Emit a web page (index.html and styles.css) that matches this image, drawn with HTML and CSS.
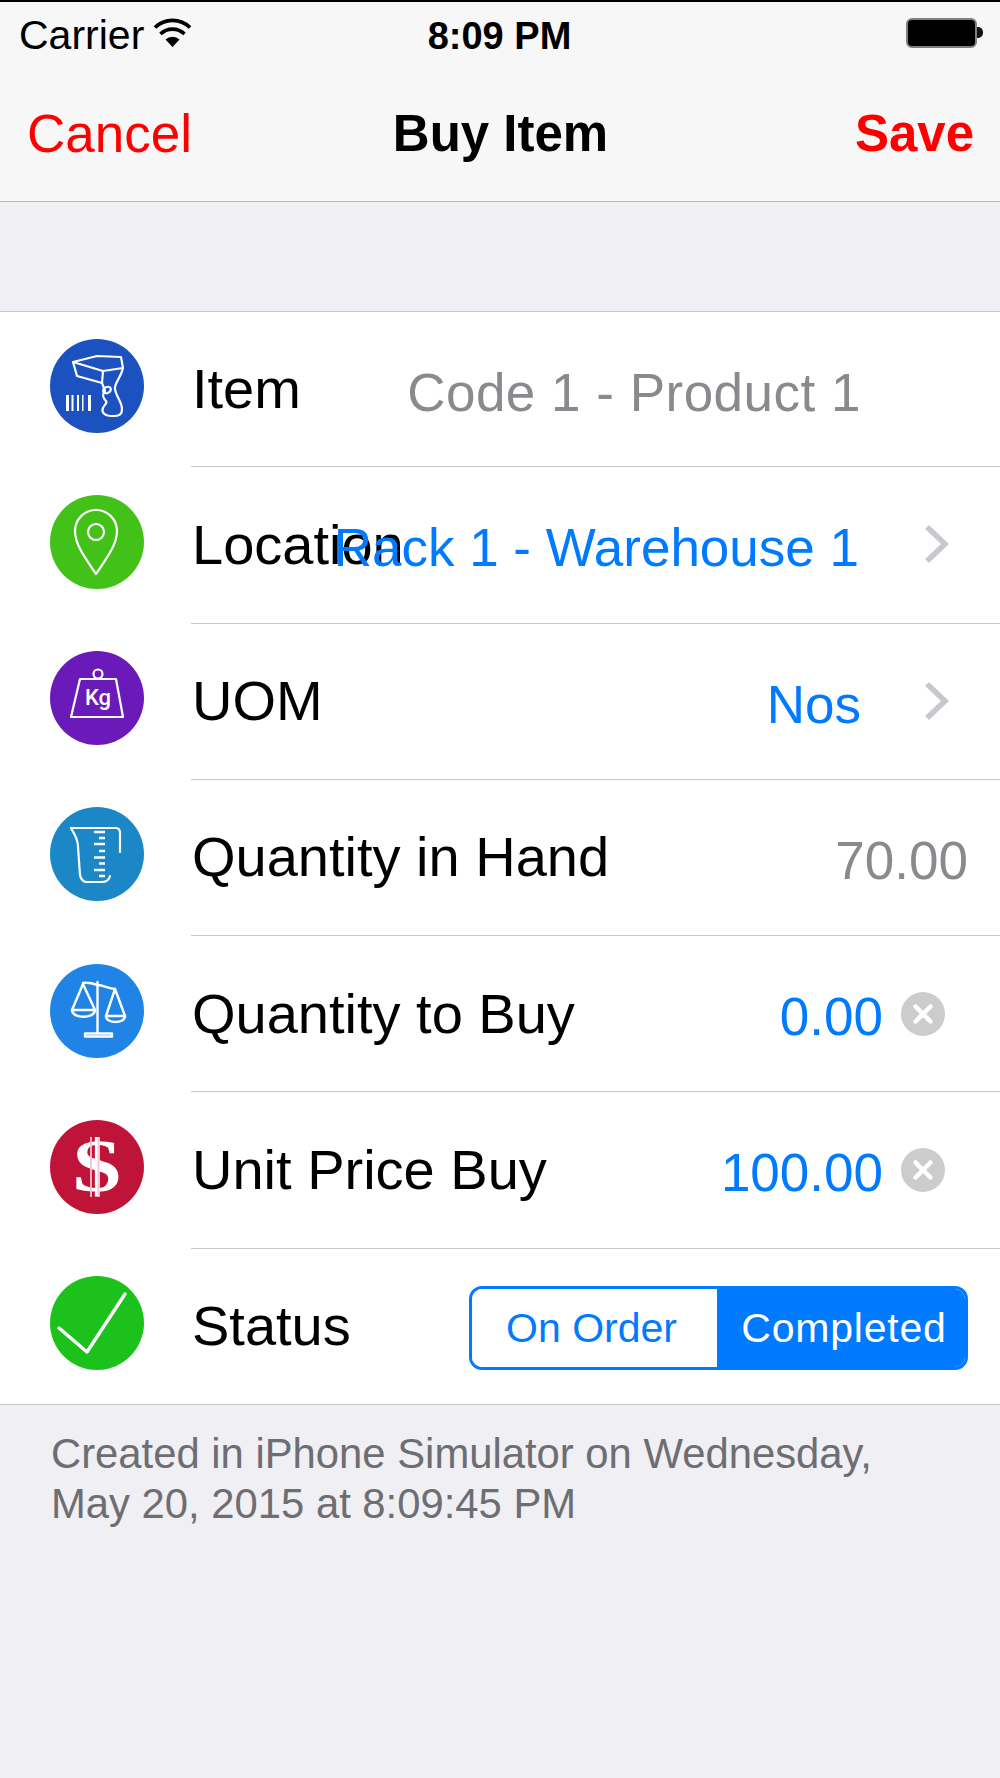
FILE: index.html
```html
<!DOCTYPE html>
<html lang="en">
<head>
<meta charset="utf-8">
<title>Buy Item</title>
<link rel="stylesheet" href="styles.css">
</head>
<body>
<div class="screen">
  <header class="bar">
    <div class="status">
      <div class="status-left">
        <span>Carrier</span>
        <svg class="wifi" viewBox="0 0 39 29"><path d="M19.500 29 L12.500 21.500 A10.500 10.500 0 0 1 26.500 21.500 Z" fill="#000"/><path d="M7.500 16 A17 17 0 0 1 31.500 16" fill="none" stroke="#000" stroke-width="3.800"/><path d="M2 9.500 A25 25 0 0 1 37 9.500" fill="none" stroke="#000" stroke-width="3.800"/></svg>
      </div>
      <span class="clock">8:09 PM</span>
      <div class="battery"><span class="battery-body"></span><span class="battery-tip"></span></div>
    </div>
    <nav class="nav">
      <span class="nav-btn">Cancel</span>
      <span class="nav-title">Buy Item</span>
      <span class="nav-btn nav-save">Save</span>
    </nav>
  </header>

  <main class="form">
    <div class="row">
      <svg class="icon" viewBox="0 0 94 94"><circle cx="47" cy="47" r="47" fill="#1b52c0"/><g fill="none" stroke="#fff" stroke-width="2.200" stroke-linejoin="round"><path d="M23 23 L47 17 L71 18 L73 29 L53 32 Z"/><path d="M23 23 L27 37 L52 44 L53 32"/><path d="M73 29 C71 38 66 42 65 48 C64 55 72 62 72 70 C72 75 69 77 65 77 L60 77 C55 77 51 73 53 69 C54 66 58 64 56 62 C53 59 52 55 55 52 L52 44"/><ellipse cx="57" cy="51" rx="4" ry="3" transform="rotate(-25 57 51)"/></g><g fill="#fff"><rect x="16" y="56" width="3" height="16"/><rect x="21.500" y="56" width="2" height="16"/><rect x="27" y="56" width="2" height="16"/><rect x="32" y="56" width="1.500" height="16"/><rect x="38" y="56" width="3" height="16"/></g></svg>
      <div class="cell">
        <span class="label">Item</span>
        <span class="value value-gray value-item">Code 1 - Product 1</span>
      </div>
    </div>
    <div class="row">
      <svg class="icon" viewBox="0 0 94 94"><circle cx="47" cy="47" r="47" fill="#42c118"/><g fill="none" stroke="#fff" stroke-width="2.200"><path d="M46 79 C36 64 25 50 25 36 A21 21 0 0 1 67 36 C67 50 56 64 46 79 Z" stroke-linejoin="round"/><circle cx="46" cy="37" r="8"/></g></svg>
      <div class="cell">
        <span class="label">Location</span>
        <span class="value value-blue value-link">Rack 1 - Warehouse 1</span>
        <svg class="chevron" viewBox="0 0 27 42"><path d="M4 4 L22 21 L4 38" fill="none" stroke="#c7c7cc" stroke-width="5.500"/></svg>
      </div>
    </div>
    <div class="row">
      <svg class="icon" viewBox="0 0 94 94"><circle cx="47" cy="47" r="47" fill="#6a1ab8"/><g fill="none" stroke="#fff" stroke-width="2.200" stroke-linejoin="round"><circle cx="48" cy="23" r="4.500"/><path d="M30 28 L66 28 L73 66 L21 66 Z"/></g><text x="48" y="54" class="kg">Kg</text></svg>
      <div class="cell">
        <span class="label">UOM</span>
        <span class="value value-blue value-nos">Nos</span>
        <svg class="chevron" viewBox="0 0 27 42"><path d="M4 4 L22 21 L4 38" fill="none" stroke="#c7c7cc" stroke-width="5.500"/></svg>
      </div>
    </div>
    <div class="row">
      <svg class="icon" viewBox="0 0 94 94"><circle cx="47" cy="47" r="47" fill="#1b87c6"/><g fill="none" stroke="#fff" stroke-width="2.200" stroke-linecap="round" stroke-linejoin="round"><path d="M21 21 L66 21 C69 21 70 23 70 26 L70 45"/><path d="M21 21 C25 28 28 33 28 40 L30 68 C31 73 33 75 37 75 L52 75 C56 75 59 73 60 69"/></g><g stroke="#fff" stroke-width="2.400"><path d="M44 25 H55 M49 31 H55 M44 37 H55 M49 44 H55 M44 50.500 H55 M49 56.500 H55 M44 63 H55 M49 69 H55"/></g></svg>
      <div class="cell">
        <span class="label">Quantity in Hand</span>
        <span class="value value-gray">70.00</span>
      </div>
    </div>
    <div class="row">
      <svg class="icon" viewBox="0 0 94 94"><circle cx="47" cy="47" r="47" fill="#1f84e6"/><g fill="none" stroke="#fff" stroke-width="2.400" stroke-linejoin="round" stroke-linecap="round"><path d="M47.500 18 V68"/><path d="M35 69.500 H62 V72.500 H35 Z"/><path d="M47.500 21 C42 19 38 18 33 19 M47.500 21 C54 21 58 25 65 25"/><path d="M33 20 L22 46 H45 Z"/><path d="M65 25 L56 52 H75 Z"/><path d="M22 46 C22 55 45 55 45 46"/><path d="M56 52 C56 60 75 60 75 52"/></g></svg>
      <div class="cell">
        <span class="label">Quantity to Buy</span>
        <span class="value value-blue value-clear">0.00</span>
        <svg class="clear" viewBox="0 0 44 44"><circle cx="22" cy="22" r="22" fill="#ccc"/><path d="M14.500 14.500 L29.500 29.500 M29.500 14.500 L14.500 29.500" stroke="#fff" stroke-width="4.500" stroke-linecap="round"/></svg>
      </div>
    </div>
    <div class="row">
      <svg class="icon" viewBox="0 0 94 94"><circle cx="47" cy="47" r="47" fill="#c01338"/><text class="dollar" transform="translate(47 71) scale(1.3 1)">$</text><path d="M41 17 V77 M48.500 17 V77" stroke="#f3c4cf" stroke-width="1.800"/></svg>
      <div class="cell">
        <span class="label">Unit Price Buy</span>
        <span class="value value-blue value-clear">100.00</span>
        <svg class="clear" viewBox="0 0 44 44"><circle cx="22" cy="22" r="22" fill="#ccc"/><path d="M14.500 14.500 L29.500 29.500 M29.500 14.500 L14.500 29.500" stroke="#fff" stroke-width="4.500" stroke-linecap="round"/></svg>
      </div>
    </div>
    <div class="row row-last">
      <svg class="icon" viewBox="0 0 94 94"><circle cx="47" cy="47" r="47" fill="#1cc11c"/><path d="M9 52 L37 76 L75 18" fill="none" stroke="#fff" stroke-width="3.400" stroke-linecap="round" stroke-linejoin="round"/></svg>
      <div class="cell">
        <span class="label">Status</span>
        <div class="segment">
          <span class="seg seg-off">On Order</span>
          <span class="seg seg-on">Completed</span>
        </div>
      </div>
    </div>
  </main>

  <p class="footnote">Created in iPhone Simulator on Wednesday,<br>May 20, 2015 at 8:09:45 PM</p>
</div>
</body>
</html>
```

FILE: styles.css
```css
* { box-sizing: border-box; }
html, body { margin: 0; padding: 0; }
body {
  width: 1000px;
  height: 1778px;
  overflow: hidden;
  font-family: "Liberation Sans", Arial, sans-serif;
  color: #000;
  background: #000;
}
.screen {
  height: 1776px;
  margin-top: 2px;
  background: #efeff4;
  display: flex;
  flex-direction: column;
}
.bar {
  height: 200px;
  background: #f7f7f7;
  border-bottom: 1px solid #b8b8ba;
  flex: none;
}
.status {
  height: 62px;
  padding: 4px 20px 0 19px;
  display: grid;
  grid-template-columns: 1fr auto 1fr;
  align-items: center;
  font-size: 41px;
}
.status-left { display: flex; align-items: center; gap: 9px; }
.wifi { width: 39px; height: 29px; margin-top: -6px; }
.clock { font-weight: 700; font-size: 38px; margin-top: 2px; }
.battery { justify-self: end; display: flex; align-items: center; margin-right: -3px; margin-top: -5px; }
.battery-body {
  width: 71px;
  height: 30px;
  background: #000;
  border: 2px solid #808080;
  border-radius: 6px;
}
.battery-tip { width: 6px; height: 11px; background: #111; border-radius: 0 5px 5px 0; }
.nav {
  height: 136px;
  padding: 2px 26px 0 27px;
  display: grid;
  grid-template-columns: 1fr auto 1fr;
  align-items: center;
  font-size: 51px;
}
.nav-btn { color: #ff0000; font-size: 53px; }
.nav-title { font-weight: 700; }
.nav-save { font-weight: 700; font-size: 51px; justify-self: end; }
.form {
  margin-top: 109px;
  background: #fff;
  border-top: 1px solid #c8c7cc;
  border-bottom: 1px solid #c8c7cc;
  flex: none;
}
.row {
  height: 156.25px;
  padding-left: 50px;
  display: flex;
  align-items: center;
  gap: 47px;
}
.row:first-child, .row-last { height: 155.25px; }
.icon { width: 94px; height: 94px; flex: none; margin-top: -7px; }
.cell {
  flex: 1;
  height: 100%;
  position: relative;
  display: flex;
  align-items: center;
  justify-content: flex-end;
  border-bottom: 1px solid #c8c7cc;
  font-size: 53px;
  padding-right: 32px;
}
.row-last .cell { border-bottom: 0; }
.label { position: absolute; left: 1px; top: 50%; transform: translateY(-50%); margin-top: -1px; font-size: 56px; }
.value { position: relative; margin-top: 6px; }
.value-gray { color: #8a8a8e; }
.value-blue { color: #007aff; }
.value-item { margin-right: 107px; letter-spacing: 0.5px; }
.value-link { margin-right: 64px; }
.value-nos { margin-right: 62px; }
.value-clear { margin-right: 18px; }
.chevron { width: 27px; height: 42px; margin-right: 18px; margin-top: -1px; }
.clear { width: 44px; height: 44px; margin-right: 23px; }
.kg { font-family: "Roboto", sans-serif; font-weight: 500; font-size: 22px; text-anchor: middle; fill: #fff; }
.dollar { font-family: "Liberation Serif", serif; font-weight: 700; font-size: 74px; text-anchor: middle; fill: #fff; }
.segment {
  width: 499px;
  height: 84px;
  margin-top: 4px;
  display: flex;
  border: 3px solid #007aff;
  border-radius: 13px;
  overflow: hidden;
  font-size: 41px;
}
.seg { display: flex; align-items: center; justify-content: center; }
.seg-off { width: 245px; padding-right: 6px; color: #007aff; background: #fff; }
.seg-on { flex: 1; padding-left: 6px; color: #fff; background: #007aff; letter-spacing: 0.8px; }
.footnote {
  flex: 1;
  margin: 0;
  padding: 24px 51px 0;
  color: #6d6d72;
  font-size: 41.8px;
  line-height: 50px;
}
```
